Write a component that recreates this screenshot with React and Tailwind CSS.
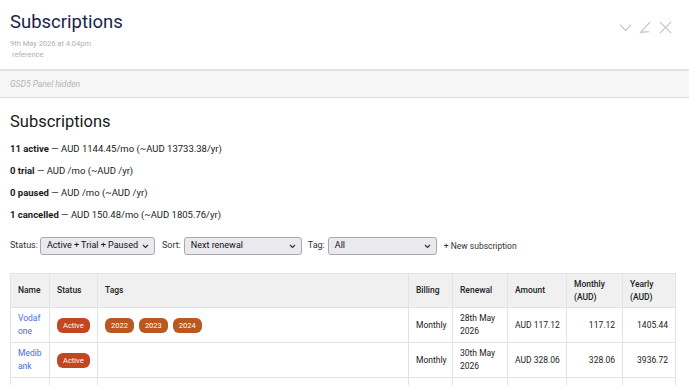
import React from 'react';

const font = { fontFamily: 'Roboto, "Liberation Sans", Arial, sans-serif' };

const Badge = ({ children, tone = 'status' }) => {
  const tones = {
    status: 'bg-[#c2461f]',
    tag: 'bg-[#b9581f]',
  };
  return (
    <span className={`inline-block rounded-[6px] px-[6px] py-[3px] text-[7.5px] leading-[9px] text-white ${tones[tone]}`}>
      {children}
    </span>
  );
};

const FakeSelect = ({ value, width }) => (
  <div
    className={`flex h-[18px] items-center justify-between whitespace-nowrap rounded-[3px] border border-[#a8a8ad] bg-[#e9e9ee] pl-[6px] pr-[5px] text-[9px] text-[#111] ${width}`}
  >
    <span>{value}</span>
    <svg width="7" height="5" viewBox="0 0 7 5" fill="none" stroke="#333" strokeWidth="1.2">
      <path d="M1 1l2.5 2.5L6 1" />
    </svg>
  </div>
);

const rows = [
  {
    name: ['Vodaf', 'one'],
    status: 'Active',
    tags: ['2022', '2023', '2024'],
    billing: 'Monthly',
    renewal: ['28th May', '2026'],
    amount: 'AUD 117.12',
    monthly: '117.12',
    yearly: '1405.44',
  },
  {
    name: ['Medib', 'ank'],
    status: 'Active',
    tags: [],
    billing: 'Monthly',
    renewal: ['30th May', '2026'],
    amount: 'AUD 328.06',
    monthly: '328.06',
    yearly: '3936.72',
  },
];

const th = 'border border-[#e3e3e3] px-[7px] text-left align-middle font-medium';
const td = 'border border-[#e3e3e3] px-[7px] align-middle';

export default function App() {
  return (
    <div className="h-[385px] w-[689px] overflow-hidden bg-white text-[#222]" style={font}>
      {/* tiddler header */}
      <div className="flex items-start justify-between px-[10px] pt-[10px] pb-[9px]">
        <div>
          <h1 className="text-[18.5px] leading-[24px] text-[#1c1f4a]">Subscriptions</h1>
          <div className="mt-[4px] text-[7.5px] leading-[11px] text-[#b0b0b0]">9th May 2026 at 4:04pm</div>
          <div className="pl-[2px] text-[7.5px] leading-[11px] text-[#b0b0b0]">reference</div>
        </div>
        <div className="mt-[10px] mr-[6px] flex items-center gap-[5px] text-[#c4c4c4]">
          <svg width="15" height="15" viewBox="0 0 16 16" fill="none" stroke="currentColor" strokeWidth="1.3">
            <path d="M2 5l6 6 6-6" />
          </svg>
          <svg width="15" height="15" viewBox="0 0 16 16" fill="none" stroke="currentColor" strokeWidth="1.2">
            <path d="M13 2L3 13" />
            <path d="M2 14c3-2 6-1 10-1.5" />
          </svg>
          <svg width="15" height="15" viewBox="0 0 16 16" fill="none" stroke="currentColor" strokeWidth="1.3">
            <path d="M2 2l12 12M14 2L2 14" />
          </svg>
        </div>
      </div>

      {/* panel bar */}
      <div className="border-t-[2px] border-b border-t-[#e2e2e2] border-b-[#dcdcdc] bg-[#f6f6f6] px-[10px] py-[7px] text-[8.5px] leading-[12px]">
        <span className="italic text-[#b4b4b4]">GSD5 Panel hidden</span>
      </div>

      {/* body */}
      <div className="px-[10px] pt-[12px]">
        <h2 className="text-[16.5px] leading-[24px] text-[#1a1a1a]">Subscriptions</h2>
        <div className="mt-[8px] flex flex-col gap-[9px] text-[9.5px] leading-[13px] text-[#1a1a1a]">
          <p><b className="font-bold">11 active</b> — AUD 1144.45/mo (~AUD 13733.38/yr)</p>
          <p><b className="font-bold">0 trial</b> — AUD /mo (~AUD /yr)</p>
          <p><b className="font-bold">0 paused</b> — AUD /mo (~AUD /yr)</p>
          <p><b className="font-bold">1 cancelled</b> — AUD 150.48/mo (~AUD 1805.76/yr)</p>
        </div>

        <div className="mt-[16px] flex items-center text-[9px] text-[#333]">
          <span className="mr-[2px]">Status:</span>
          <FakeSelect value="Active + Trial + Paused" width="w-[115px]" />
          <span className="ml-[7px] mr-[3px]">Sort:</span>
          <FakeSelect value="Next renewal" width="w-[118px]" />
          <span className="ml-[6px] mr-[3px]">Tag:</span>
          <FakeSelect value="All" width="w-[109px]" />
          <span className="ml-[7px] text-[8.5px]">+ New subscription</span>
        </div>

        <table className="mt-[18px] w-[665px] table-fixed border-collapse text-[8.5px] leading-[13px] text-[#222]">
          <colgroup>
            <col className="w-[39px]" />
            <col className="w-[48px]" />
            <col className="w-[311px]" />
            <col className="w-[44px]" />
            <col className="w-[55px]" />
            <col className="w-[59px]" />
            <col className="w-[56px]" />
            <col className="w-[53px]" />
          </colgroup>
          <thead>
            <tr className="h-[34px] bg-[#f0f0f0]">
              <th className={th}>Name</th>
              <th className={th}>Status</th>
              <th className={th}>Tags</th>
              <th className={th}>Billing</th>
              <th className={th}>Renewal</th>
              <th className={th}>Amount</th>
              <th className={th}>Monthly<br />(AUD)</th>
              <th className={th}>Yearly<br />(AUD)</th>
            </tr>
          </thead>
          <tbody>
            {rows.map((r) => (
              <tr key={r.amount} className="h-[35px]">
                <td className={`${td} text-[#4a6be0]`}>
                  {r.name[0]}<br />{r.name[1]}
                </td>
                <td className={td}><Badge>{r.status}</Badge></td>
                <td className={td}>
                  <div className="flex gap-[5px]">
                    {r.tags.map((t) => <Badge key={t} tone="tag">{t}</Badge>)}
                  </div>
                </td>
                <td className={td}>{r.billing}</td>
                <td className={td}>{r.renewal[0]}<br />{r.renewal[1]}</td>
                <td className={`${td} whitespace-nowrap`}>{r.amount}</td>
                <td className={`${td} text-right`}>{r.monthly}</td>
                <td className={`${td} text-right`}>{r.yearly}</td>
              </tr>
            ))}
            <tr className="h-[35px]">
              {Array.from({ length: 8 }).map((_, i) => <td key={i} className={td}></td>)}
            </tr>
          </tbody>
        </table>
      </div>
    </div>
  );
}
